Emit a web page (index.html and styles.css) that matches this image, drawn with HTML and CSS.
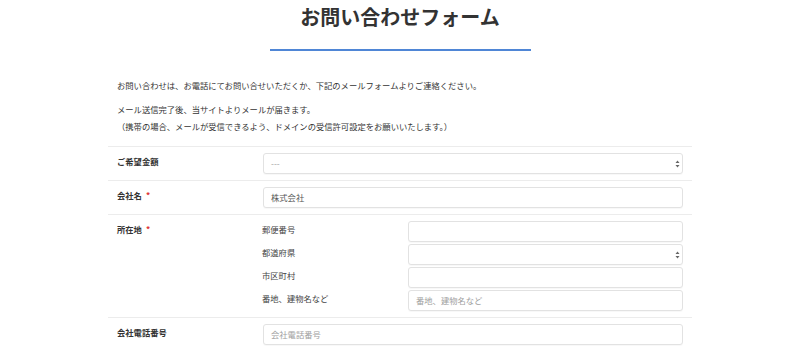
FILE: index.html
```html
<!DOCTYPE html>
<html lang="ja">
<head>
<meta charset="utf-8">
<title>お問い合わせフォーム</title>
<link rel="stylesheet" href="styles.css">
</head>
<body>
<div class="page">
  <header class="head">
    <h1 class="title">お問い合わせフォーム</h1>
    <div class="rule"></div>
  </header>
  <div class="intro">
    <p>お問い合わせは、お電話にてお問い合せいただくか、下記のメールフォームよりご連絡ください。</p>
    <p>メール送信完了後、当サイトよりメールが届きます。<br>（携帯の場合、メールが受信できるよう、ドメインの受信許可設定をお願いいたします。）</p>
  </div>
  <div class="form">
    <div class="row">
      <div class="label">ご希望金額</div>
      <div class="field">
        <div class="select">
          <div class="control muted">---</div>
          <svg class="arrows" width="5" height="8" viewBox="0 0 5 8"><path d="M2.5 0.5L4.5 3H0.5Z M2.5 7.5L4.5 5H0.5Z" fill="#666"/></svg>
        </div>
      </div>
    </div>
    <div class="row">
      <div class="label">会社名<span class="req">*</span></div>
      <div class="field">
        <div class="control">株式会社</div>
      </div>
    </div>
    <div class="row">
      <div class="label">所在地<span class="req">*</span></div>
      <div class="field subs">
        <div class="sub">
          <div class="sublabel">郵便番号</div>
          <div class="control"></div>
        </div>
        <div class="sub">
          <div class="sublabel">都道府県</div>
          <div class="select">
            <div class="control"></div>
            <svg class="arrows" width="5" height="8" viewBox="0 0 5 8"><path d="M2.5 0.5L4.5 3H0.5Z M2.5 7.5L4.5 5H0.5Z" fill="#666"/></svg>
          </div>
        </div>
        <div class="sub">
          <div class="sublabel">市区町村</div>
          <div class="control"></div>
        </div>
        <div class="sub">
          <div class="sublabel">番地、建物名など</div>
          <div class="control muted">番地、建物名など</div>
        </div>
      </div>
    </div>
    <div class="row">
      <div class="label">会社電話番号</div>
      <div class="field">
        <div class="control muted">会社電話番号</div>
      </div>
    </div>
  </div>
</div>
</body>
</html>
```
FILE: styles.css
```css
html, body {
  margin: 0;
  padding: 0;
  background: #ffffff;
}
body {
  font-family: "Noto Sans CJK JP", "Noto Sans", sans-serif;
  color: #333333;
}
.page {
  width: 584px;
  margin: 0 auto;
}
.head {
  display: flex;
  flex-direction: column;
  align-items: center;
}
.title {
  margin: 0;
  padding-top: 2px;
  font-size: 20px;
  line-height: 30px;
  font-weight: bold;
  color: #333333;
}
.rule {
  margin-top: 17px;
  width: 261px;
  height: 2px;
  background: #4f86d6;
}
.intro {
  padding: 0 9px;
  margin-top: 26px;
  margin-bottom: 11px;
}
.intro p {
  margin: 0 0 7px 0;
  font-size: 8.3px;
  line-height: 17px;
  color: #333333;
}
.intro p:last-child {
  margin-bottom: 0;
}
.form {
  border-bottom: 1px solid #eeeeee;
}
.row {
  display: flex;
  border-top: 1px solid #ececec;
  padding: 6px 9px 6px 9px;
}
.label {
  width: 146px;
  flex: none;
  font-size: 8.3px;
  font-weight: bold;
  line-height: 14px;
  padding-top: 1px;
  color: #333333;
}
.req {
  color: #e03a3a;
  margin-left: 4px;
}
.field {
  flex: 1;
}
.subs {
  display: flex;
  flex-direction: column;
  gap: 2px;
}
.sub {
  display: flex;
  align-items: flex-start;
}
.sublabel {
  width: 146px;
  flex: none;
  font-size: 8.3px;
  line-height: 16px;
  color: #444444;
  margin-left: -1px;
}
.sub .control, .sub .select {
  flex: 1;
}
.control {
  box-sizing: border-box;
  height: 21px;
  border: 1px solid #e2e2e2;
  border-radius: 3px;
  box-shadow: 0 1px 1px rgba(0, 0, 0, 0.03);
  padding: 0 7px;
  font-size: 8.3px;
  line-height: 19px;
  color: #555555;
  background: #ffffff;
}
.muted {
  color: #a0a0a0;
}
.select {
  position: relative;
}
.arrows {
  position: absolute;
  right: 3px;
  top: 7px;
}
```
